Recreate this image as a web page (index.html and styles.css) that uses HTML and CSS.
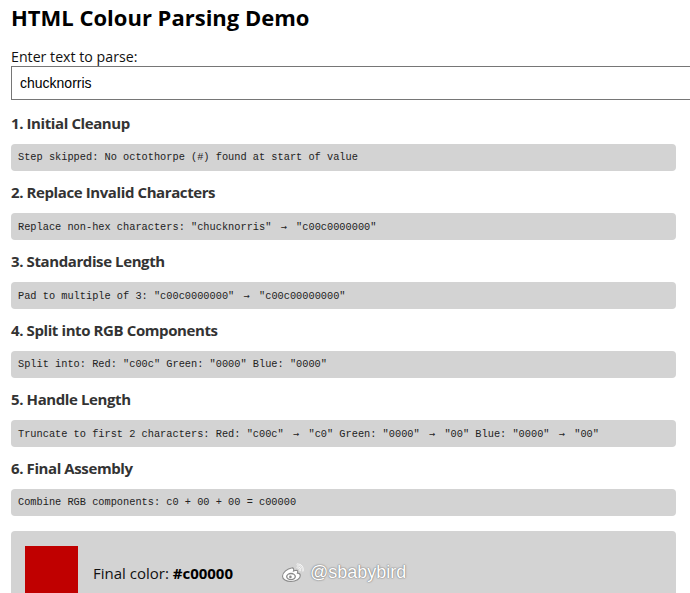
FILE: index.html
```html
<!DOCTYPE html>
<html lang="en">
<head>
<meta charset="utf-8">
<title>HTML Colour Parsing Demo</title>
<link rel="stylesheet" href="styles.css">
</head>
<body>
<main class="page">
  <h1 class="title">HTML Colour Parsing Demo</h1>
  <label class="label" for="src">Enter text to parse:</label>
  <input class="src" id="src" type="text" value="chucknorris">

  <section class="step">
    <h3 class="step-title">1. Initial Cleanup</h3>
    <div class="step-box">Step skipped: No octothorpe (#) found at start of value</div>
  </section>
  <section class="step">
    <h3 class="step-title">2. Replace Invalid Characters</h3>
    <div class="step-box">Replace non-hex characters: "chucknorris" <span class="arr">→</span> "c00c0000000"</div>
  </section>
  <section class="step">
    <h3 class="step-title">3. Standardise Length</h3>
    <div class="step-box">Pad to multiple of 3: "c00c0000000" <span class="arr">→</span> "c00c00000000"</div>
  </section>
  <section class="step">
    <h3 class="step-title">4. Split into RGB Components</h3>
    <div class="step-box">Split into: Red: "c00c" Green: "0000" Blue: "0000"</div>
  </section>
  <section class="step">
    <h3 class="step-title">5. Handle Length</h3>
    <div class="step-box">Truncate to first 2 characters: Red: "c00c" <span class="arr">→</span> "c0" Green: "0000" <span class="arr">→</span> "00" Blue: "0000" <span class="arr">→</span> "00"</div>
  </section>
  <section class="step">
    <h3 class="step-title">6. Final Assembly</h3>
    <div class="step-box">Combine RGB components: c0 + 00 + 00 = c00000</div>
  </section>

  <div class="result">
    <div class="swatch"></div>
    <div class="result-text">Final color: <strong>#c00000</strong></div>
  </div>
</main>
<div class="watermark">
  <svg class="wm-logo" width="25" height="21" viewBox="0 0 25 21" aria-hidden="true">
    <path d="M10.5 6c-4 .5-9 4.6-9 8.2 0 3.1 3.7 5.3 8.4 5.3 5.2 0 9.4-2.7 9.4-5.7 0-1.9-1.7-2.7-2.9-2.7.6-1.5.4-2.7-1-2.8-1 0-2.3.5-2.9.8.5-1.6.3-3.7-2-3.1z" fill="#fff" stroke="#8a8a8a" stroke-width="1.1"/>
    <ellipse cx="10" cy="14.6" rx="4.3" ry="3.1" fill="none" stroke="#8a8a8a" stroke-width="1.3"/>
    <circle cx="9.4" cy="14.9" r="1.3" fill="#8a8a8a"/>
    <path d="M16.5 2.5a5.5 5.5 0 0 1 5.5 6M16.5 5.3a2.7 2.7 0 0 1 2.7 3.1" fill="none" stroke="#fff" stroke-width="1.8" stroke-linecap="round"/>
    <path d="M16.5 2.5a5.5 5.5 0 0 1 5.5 6M16.5 5.3a2.7 2.7 0 0 1 2.7 3.1" fill="none" stroke="#8a8a8a" stroke-width="0.5" stroke-linecap="round" opacity="0.6"/>
  </svg>
  <span class="wm-text">@sbabybird</span>
</div>
</body>
</html>
```

FILE: styles.css
```css
html, body {
  margin: 0;
  padding: 0;
  background: #fff;
}

body {
  font-family: "Open Sans", "Noto Sans", sans-serif;
  color: #000;
  overflow: hidden;
}

.page {
  width: 665px;
  padding: 0 11px;
}

.title {
  margin: 0;
  padding-top: 2px;
  font-size: 22px;
  line-height: 30px;
  font-weight: 700;
  color: #000;
}

.label {
  display: block;
  margin-top: 16px;
  font-size: 14.2px;
  line-height: 18px;
  color: #111;
}

.src {
  display: block;
  box-sizing: border-box;
  width: 684px;
  height: 34px;
  margin: 0;
  padding: 0 8px;
  border: 1px solid #767676;
  border-radius: 0;
  font-family: "Liberation Sans", Arial, sans-serif;
  font-size: 14px;
  color: #000;
  background: #fff;
}

.step-title {
  margin: 13px 0 11px;
  font-size: 15px;
  line-height: 20px;
  font-weight: 700;
  letter-spacing: -0.4px;
  color: #333;
}

.step + .step .step-title {
  margin-top: 11px;
}

.step-box {
  box-sizing: border-box;
  height: 27px;
  padding: 0 7px;
  background: #d3d3d3;
  border-radius: 4px;
  font-family: "Liberation Mono", "DejaVu Sans Mono", monospace;
  font-size: 10.3px;
  line-height: 27px;
  color: #222;
  white-space: nowrap;
}

.arr {
  display: inline-block;
  width: 2ch;
  text-align: center;
  font-family: "DejaVu Sans Mono", monospace;
}

.result {
  display: flex;
  align-items: center;
  gap: 15px;
  margin-top: 15px;
  padding: 15px 14px;
  background: #d3d3d3;
  border-radius: 4px;
}

.swatch {
  width: 53px;
  height: 53px;
  flex: none;
  background: #c00000;
}

.result-text {
  font-size: 15px;
  color: #111;
}

.result-text strong {
  font-weight: 700;
  color: #000;
}

.watermark {
  position: absolute;
  left: 281px;
  top: 562px;
  display: flex;
  align-items: center;
  gap: 4px;
}

.wm-text {
  font-family: "Liberation Sans", Arial, sans-serif;
  font-size: 18px;
  color: #fff;
  text-shadow: 0 0 2px #777, 0 0 1px #777;
}
```
